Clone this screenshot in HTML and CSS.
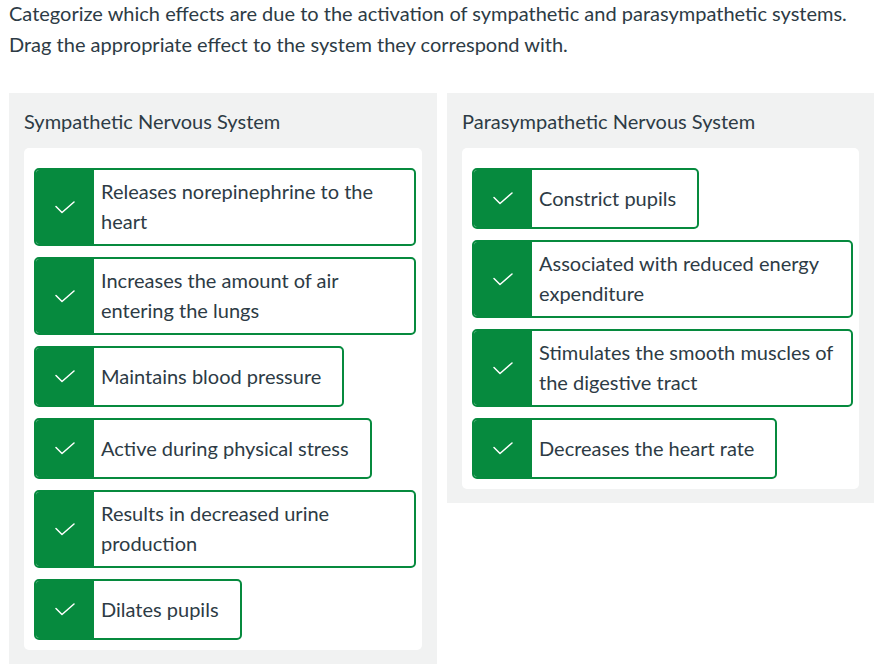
FILE: index.html
```html
<!DOCTYPE html>
<html lang="en">
<head>
<meta charset="utf-8">
<title>Categorize effects</title>
<link rel="stylesheet" href="styles.css">
</head>
<body>
<div class="question">
  <p class="prompt">Categorize which effects are due to the activation of sympathetic and parasympathetic systems. Drag the appropriate effect to the system they correspond with.</p>
  <div class="categories">
    <section class="category">
      <h2 class="category-title">Sympathetic Nervous System</h2>
      <div class="dropzone">
        <div class="item"><span class="mark"><svg viewBox="0 0 20 13" width="20" height="13"><path d="M1 5.5 L7 11.5 L19 1" /></svg></span><span class="label">Releases norepinephrine to the heart</span></div>
        <div class="item"><span class="mark"><svg viewBox="0 0 20 13" width="20" height="13"><path d="M1 5.5 L7 11.5 L19 1" /></svg></span><span class="label">Increases the amount of air entering the lungs</span></div>
        <div class="item"><span class="mark"><svg viewBox="0 0 20 13" width="20" height="13"><path d="M1 5.5 L7 11.5 L19 1" /></svg></span><span class="label">Maintains blood pressure</span></div>
        <div class="item"><span class="mark"><svg viewBox="0 0 20 13" width="20" height="13"><path d="M1 5.5 L7 11.5 L19 1" /></svg></span><span class="label">Active during physical stress</span></div>
        <div class="item"><span class="mark"><svg viewBox="0 0 20 13" width="20" height="13"><path d="M1 5.5 L7 11.5 L19 1" /></svg></span><span class="label">Results in decreased urine production</span></div>
        <div class="item"><span class="mark"><svg viewBox="0 0 20 13" width="20" height="13"><path d="M1 5.5 L7 11.5 L19 1" /></svg></span><span class="label">Dilates pupils</span></div>
      </div>
    </section>
    <section class="category">
      <h2 class="category-title">Parasympathetic Nervous System</h2>
      <div class="dropzone">
        <div class="item"><span class="mark"><svg viewBox="0 0 20 13" width="20" height="13"><path d="M1 5.5 L7 11.5 L19 1" /></svg></span><span class="label">Constrict pupils</span></div>
        <div class="item"><span class="mark"><svg viewBox="0 0 20 13" width="20" height="13"><path d="M1 5.5 L7 11.5 L19 1" /></svg></span><span class="label">Associated with reduced energy expenditure</span></div>
        <div class="item"><span class="mark"><svg viewBox="0 0 20 13" width="20" height="13"><path d="M1 5.5 L7 11.5 L19 1" /></svg></span><span class="label label-tight">Stimulates the smooth muscles of the digestive tract</span></div>
        <div class="item"><span class="mark"><svg viewBox="0 0 20 13" width="20" height="13"><path d="M1 5.5 L7 11.5 L19 1" /></svg></span><span class="label">Decreases the heart rate</span></div>
      </div>
    </section>
  </div>
</div>
</body>
</html>
```
FILE: styles.css
```css
html, body {
  margin: 0;
  padding: 0;
  background: #ffffff;
}

body {
  font-family: Lato, "Open Sans", "Liberation Sans", sans-serif;
  font-size: 20px;
  color: #2d3b45;
}

.question {
  padding: 0 9px;
}

.prompt {
  margin: -2px 0 0 0;
  width: 860px;
  line-height: 31px;
}

.categories {
  display: grid;
  grid-template-columns: 428px 427px;
  column-gap: 10px;
  align-items: start;
  margin-top: 33px;
}

.category {
  background: #f1f2f2;
  padding: 14px 15px 14px 15px;
}

.category-title {
  margin: 0 0 13px 0;
  font-size: 20px;
  font-weight: 400;
  line-height: 28px;
}

.dropzone {
  background: #ffffff;
  border-radius: 5px;
  padding: 20px 6px 10px 10px;
  display: flex;
  flex-direction: column;
  align-items: flex-start;
  gap: 11px;
}

.item {
  display: flex;
  align-items: stretch;
  max-width: 100%;
  min-height: 61px;
  box-sizing: border-box;
  border: 2px solid #068a3e;
  border-radius: 5px;
  background: #ffffff;
  overflow: hidden;
}

.mark {
  flex: 0 0 58px;
  background: #068a3e;
  display: flex;
  align-items: center;
  justify-content: center;
}

.mark svg {
  display: block;
}

.mark path {
  fill: none;
  stroke: #ffffff;
  stroke-width: 1.5;
  stroke-linecap: round;
  stroke-linejoin: round;
}

.label {
  display: flex;
  align-items: center;
  padding: 6px 21px 8px 7px;
  line-height: 30px;
}

.label-tight {
  padding-right: 12px;
}
```
